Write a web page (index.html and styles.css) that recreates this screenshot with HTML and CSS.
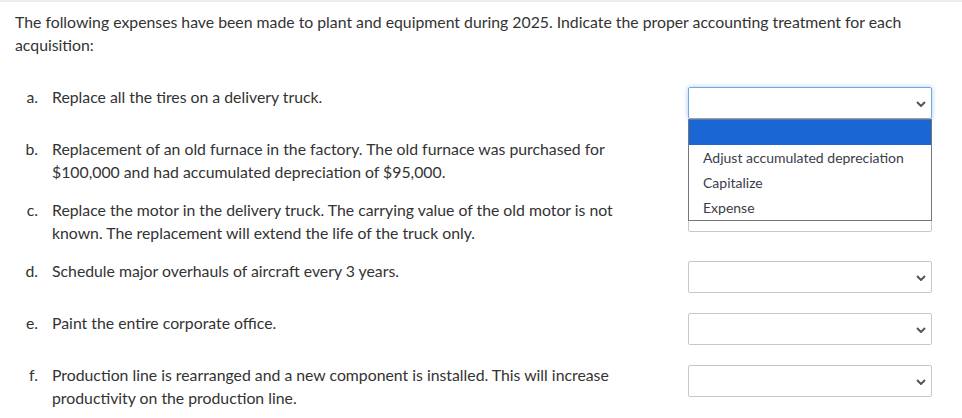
FILE: index.html
```html
<!DOCTYPE html>
<html lang="en">
  <head>
    <meta charset="UTF-8" />
    <meta name="viewport" content="width=device-width, initial-scale=1.0" />
    <title>Plant and Equipment Expenses</title>
    <link rel="stylesheet" href="styles.css">
  </head>
  <body>
    <div class="question">
      <p class="intro">
        The following expenses have been made to plant and equipment during 2025. Indicate the proper accounting treatment for each acquisition:
      </p>
      <div class="items">
        <div class="row">
          <div class="item">
            <span class="label">a.</span>
            <span class="text">Replace all the tires on a delivery truck.</span>
          </div>
          <div class="answer">
            <div class="select focused">
              <svg class="chevron" width="10" height="6" viewBox="0 0 10 6"><path d="M1 1 L5 5 L9 1" fill="none" stroke="#555" stroke-width="2" /></svg>
            </div>
            <ul class="dropdown">
              <li class="highlighted">&nbsp;</li>
              <li>Adjust accumulated depreciation</li>
              <li>Capitalize</li>
              <li>Expense</li>
            </ul>
          </div>
        </div>
        <div class="row">
          <div class="item">
            <span class="label">b.</span>
            <span class="text">Replacement of an old furnace in the factory. The old furnace was purchased for $100,000 and had accumulated depreciation of $95,000.</span>
          </div>
          <div class="answer">
            <div class="select">
              <svg class="chevron" width="10" height="6" viewBox="0 0 10 6"><path d="M1 1 L5 5 L9 1" fill="none" stroke="#555" stroke-width="2" /></svg>
            </div>
          </div>
        </div>
        <div class="row">
          <div class="item">
            <span class="label">c.</span>
            <span class="text">Replace the motor in the delivery truck. The carrying value of the old motor is not known. The replacement will extend the life of the truck only.</span>
          </div>
          <div class="answer">
            <div class="select">
              <svg class="chevron" width="10" height="6" viewBox="0 0 10 6"><path d="M1 1 L5 5 L9 1" fill="none" stroke="#555" stroke-width="2" /></svg>
            </div>
          </div>
        </div>
        <div class="row">
          <div class="item">
            <span class="label">d.</span>
            <span class="text">Schedule major overhauls of aircraft every 3 years.</span>
          </div>
          <div class="answer">
            <div class="select">
              <svg class="chevron" width="10" height="6" viewBox="0 0 10 6"><path d="M1 1 L5 5 L9 1" fill="none" stroke="#555" stroke-width="2" /></svg>
            </div>
          </div>
        </div>
        <div class="row">
          <div class="item">
            <span class="label">e.</span>
            <span class="text">Paint the entire corporate office.</span>
          </div>
          <div class="answer">
            <div class="select">
              <svg class="chevron" width="10" height="6" viewBox="0 0 10 6"><path d="M1 1 L5 5 L9 1" fill="none" stroke="#555" stroke-width="2" /></svg>
            </div>
          </div>
        </div>
        <div class="row">
          <div class="item">
            <span class="label">f.</span>
            <span class="text">Production line is rearranged and a new component is installed. This will increase productivity on the production line.</span>
          </div>
          <div class="answer">
            <div class="select">
              <svg class="chevron" width="10" height="6" viewBox="0 0 10 6"><path d="M1 1 L5 5 L9 1" fill="none" stroke="#555" stroke-width="2" /></svg>
            </div>
          </div>
        </div>
      </div>
    </div>
  </body>
</html>
```

FILE: styles.css
```css
body {
  font-family: Lato, "Open Sans", sans-serif;
  font-size: 15.8px;
  line-height: 23px;
  color: #333;
  background-color: #fff;
  margin: 0;
}
.question {
  border-top: 2px solid #ececec;
  padding: 8px 15px 0 15px;
}
.intro {
  margin: 0 0 29px 0;
}
.row {
  display: grid;
  grid-template-columns: 673px 244px;
  align-items: start;
}
.item {
  display: flex;
  gap: 14px;
  padding-bottom: 15px;
}
.label {
  width: 23px;
  flex-shrink: 0;
  text-align: right;
}
.text {
  width: 580px;
}
.answer {
  position: relative;
  padding: 2px 0 18px 0;
}
.select {
  box-sizing: border-box;
  height: 32px;
  border: 1px solid #c8c8c8;
  border-radius: 2px;
  background-color: #fff;
  display: flex;
  align-items: center;
  justify-content: flex-end;
  padding-right: 5px;
}
.select.focused {
  border-color: #72a9e4;
  box-shadow: 0 0 5px rgba(110, 168, 230, 0.6);
}
.chevron {
  display: block;
  margin-top: 2px;
}
.dropdown {
  position: absolute;
  top: 34px;
  left: 0;
  z-index: 2;
  box-sizing: border-box;
  width: 244px;
  margin: 0;
  padding: 0;
  list-style: none;
  background-color: #fff;
  border: 1px solid #767676;
  font-size: 14px;
  color: #3a3d4a;
}
.dropdown li {
  height: 25px;
  line-height: 25px;
  padding-left: 14px;
}
.dropdown li.highlighted {
  background-color: #1a66d5;
}
```
